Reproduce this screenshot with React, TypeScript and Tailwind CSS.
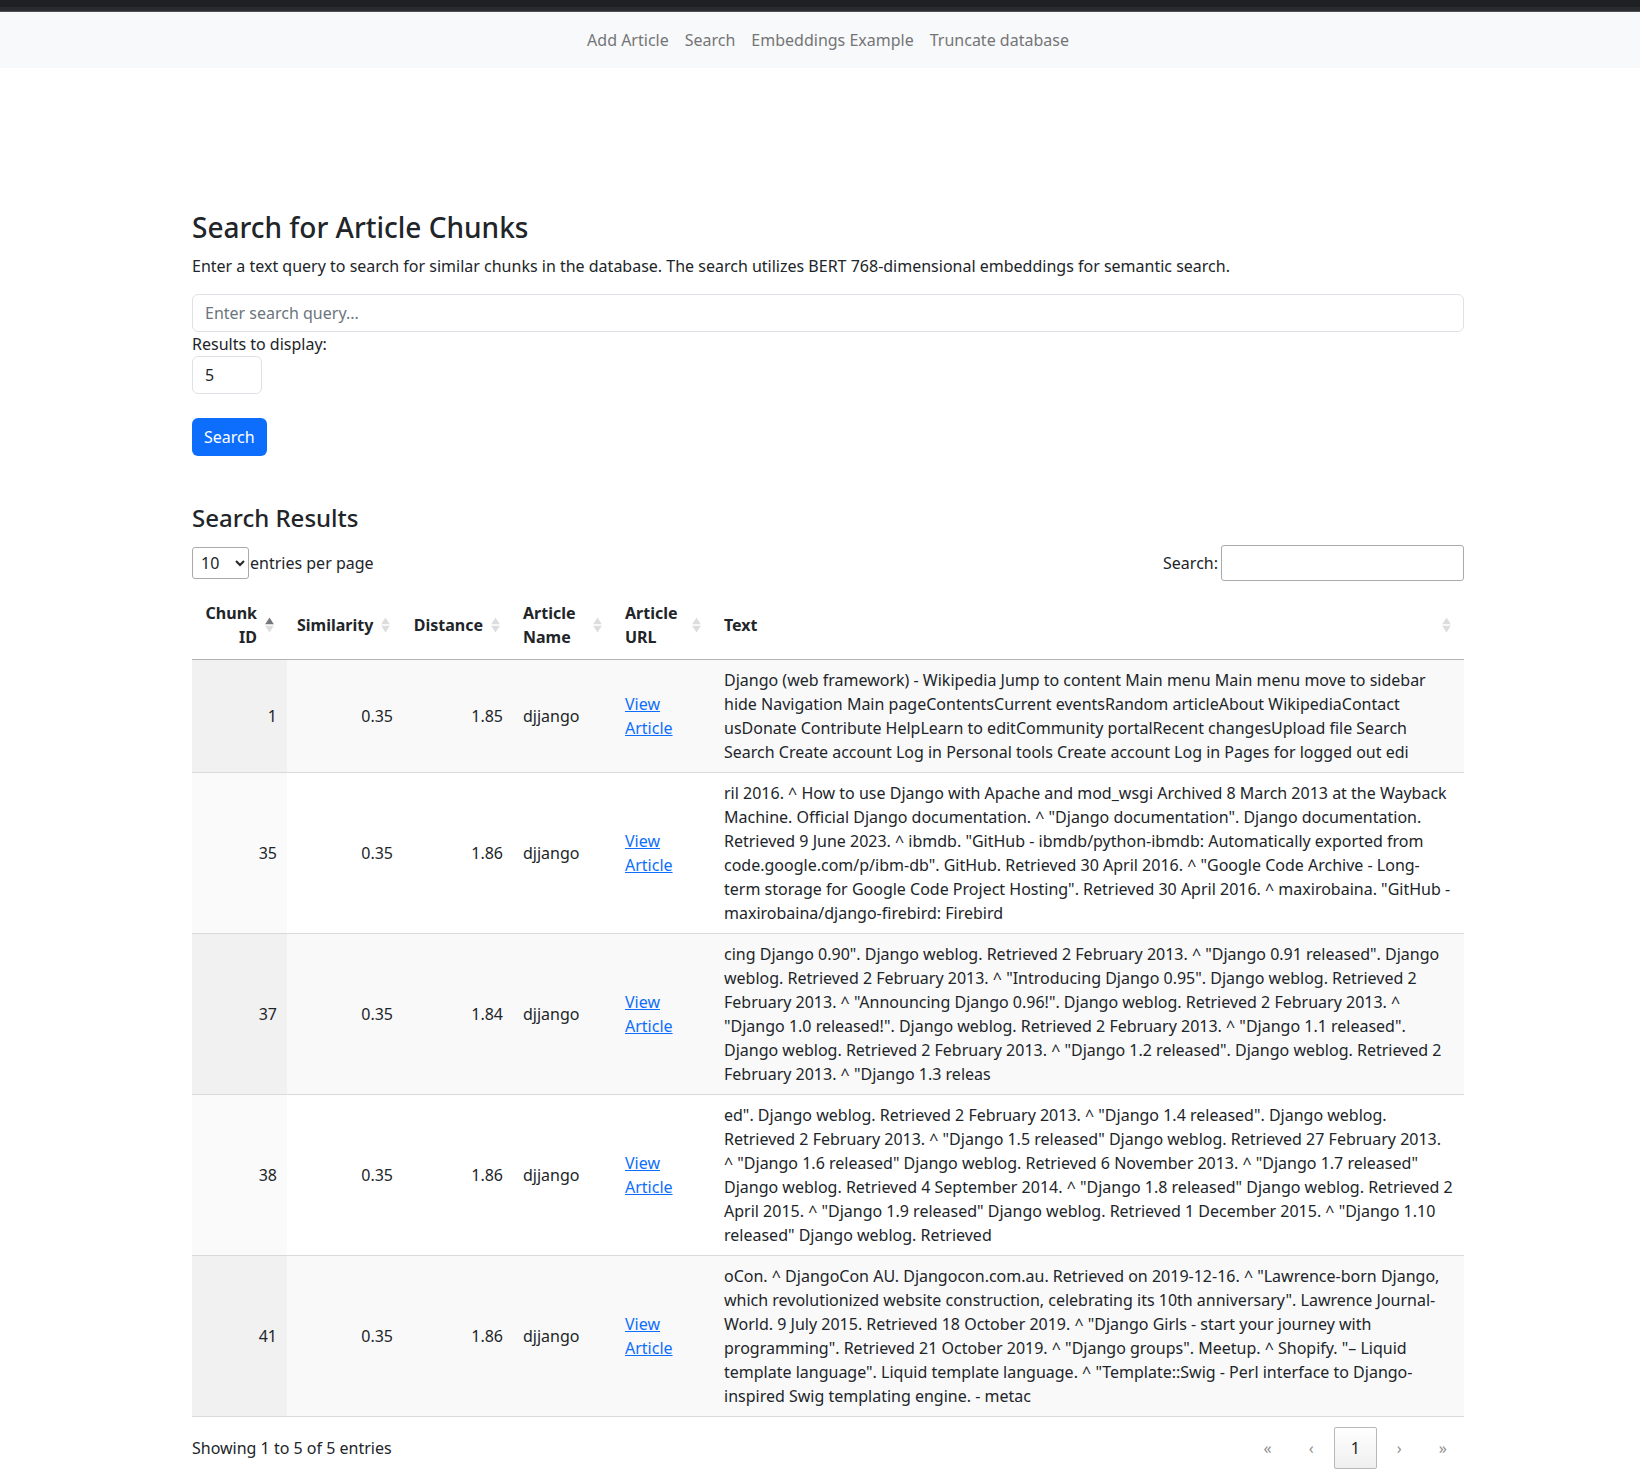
import React from "react";

type Row = { id: number; sim: string; dist: string; name: string; text: string };

const rows: Row[] = [
  {
    id: 1,
    sim: "0.35",
    dist: "1.85",
    name: "djjango",
    text: "Django (web framework) - Wikipedia Jump to content Main menu Main menu move to sidebar hide Navigation Main pageContentsCurrent eventsRandom articleAbout WikipediaContact usDonate Contribute HelpLearn to editCommunity portalRecent changesUpload file Search Search Create account Log in Personal tools Create account Log in Pages for logged out edi",
  },
  {
    id: 35,
    sim: "0.35",
    dist: "1.86",
    name: "djjango",
    text: 'ril 2016. ^ How to use Django with Apache and mod_wsgi Archived 8 March 2013 at the Wayback Machine. Official Django documentation. ^ "Django documentation". Django documentation. Retrieved 9 June 2023. ^ ibmdb. "GitHub - ibmdb/python-ibmdb: Automatically exported from code.google.com/p/ibm-db". GitHub. Retrieved 30 April 2016. ^ "Google Code Archive - Long-term storage for Google Code Project Hosting". Retrieved 30 April 2016. ^ maxirobaina. "GitHub - maxirobaina/django-firebird: Firebird',
  },
  {
    id: 37,
    sim: "0.35",
    dist: "1.84",
    name: "djjango",
    text: 'cing Django 0.90". Django weblog. Retrieved 2 February 2013. ^ "Django 0.91 released". Django weblog. Retrieved 2 February 2013. ^ "Introducing Django 0.95". Django weblog. Retrieved 2 February 2013. ^ "Announcing Django 0.96!". Django weblog. Retrieved 2 February 2013. ^ "Django 1.0 released!". Django weblog. Retrieved 2 February 2013. ^ "Django 1.1 released". Django weblog. Retrieved 2 February 2013. ^ "Django 1.2 released". Django weblog. Retrieved 2 February 2013. ^ "Django 1.3 releas',
  },
  {
    id: 38,
    sim: "0.35",
    dist: "1.86",
    name: "djjango",
    text: 'ed". Django weblog. Retrieved 2 February 2013. ^ "Django 1.4 released". Django weblog. Retrieved 2 February 2013. ^ "Django 1.5 released" Django weblog. Retrieved 27 February 2013. ^ "Django 1.6 released" Django weblog. Retrieved 6 November 2013. ^ "Django 1.7 released" Django weblog. Retrieved 4 September 2014. ^ "Django 1.8 released" Django weblog. Retrieved 2 April 2015. ^ "Django 1.9 released" Django weblog. Retrieved 1 December 2015. ^ "Django 1.10 released" Django weblog. Retrieved',
  },
  {
    id: 41,
    sim: "0.35",
    dist: "1.86",
    name: "djjango",
    text: 'oCon. ^ DjangoCon AU. Djangocon.com.au. Retrieved on 2019-12-16. ^ "Lawrence-born Django, which revolutionized website construction, celebrating its 10th anniversary". Lawrence Journal-World. 9 July 2015. Retrieved 18 October 2019. ^ "Django Girls - start your journey with programming". Retrieved 21 October 2019. ^ "Django groups". Meetup. ^ Shopify. "\u2013 Liquid template language". Liquid template language. ^ "Template::Swig - Perl interface to Django-inspired Swig templating engine. - metac',
  },
];

function SortIcon({ active = false }: { active?: boolean }) {
  return (
    <span className="absolute right-[12px] top-1/2 -translate-y-1/2 flex w-[12px] flex-col items-center gap-[1px]">
      <svg width="9" height="7" viewBox="0 0 9 7">
        <polygon points="4.5,0 9,7 0,7" fill={active ? "#75777a" : "#dcdddf"} />
      </svg>
      <svg width="9" height="7" viewBox="0 0 9 7">
        <polygon points="0,0 9,0 4.5,7" fill="#dcdddf" />
      </svg>
    </span>
  );
}

export default function App() {
  return (
    <div className="min-h-screen bg-white font-['Noto_Sans',sans-serif] text-[16px] leading-6 text-[#212529]">
      <div className="h-[7px] bg-[#1f2023]" />
      <div className="h-[5px] border-b border-[#505154] bg-[#2a2b2e]" />
      <nav className="flex h-[56px] items-center justify-center bg-[#f8f9fa] pl-4">
        {["Add Article", "Search", "Embeddings Example", "Truncate database"].map((l) => (
          <a key={l} href="#" className="px-2 text-[#747577] no-underline">
            {l}
          </a>
        ))}
      </nav>

      <main className="pl-4 pb-[6px]">
        <div className="mx-auto w-[1272px] pt-[143px]">
          <h3 className="h-[34px] text-[28px] font-medium leading-[1.2]">Search for Article Chunks</h3>
          <p className="mt-[9px]">
            Enter a text query to search for similar chunks in the database. The search utilizes BERT 768-dimensional
            embeddings for semantic search.
          </p>
          <input
            type="text"
            placeholder="Enter search query..."
            className="mt-4 block h-[38px] w-full rounded-[6px] border border-[#dee2e6] px-3 text-[16px] outline-none placeholder:text-[#6c757d]"
          />
          <label className="block">Results to display:</label>
          <input
            type="text"
            defaultValue="5"
            className="block h-[38px] w-[70px] rounded-[6px] border border-[#dee2e6] px-3 text-[16px] outline-none"
          />
          <button className="mt-6 h-[38px] rounded-[6px] bg-[#0d6efd] px-3 text-white">Search</button>

          <h4 className="mt-12 h-[29px] text-[24px] font-medium leading-[1.2]">Search Results</h4>

          <div className="mt-3 flex h-[36px] items-center justify-between">
            <div className="flex items-center">
              <select className="h-[32px] w-[57px] rounded-[3px] border border-[#aaaaaa] bg-transparent px-1 text-[16px] text-[#212529]">
                <option>10</option>
                <option>25</option>
                <option>50</option>
              </select>
              <span className="ml-[1px]">entries per page</span>
            </div>
            <div className="flex items-center">
              <span>Search:</span>
              <input
                type="text"
                className="ml-[3px] h-[36px] w-[243px] rounded-[3px] border border-[#aaaaaa] px-1 outline-none"
              />
            </div>
          </div>

          <table className="mt-[10px] w-full table-fixed border-collapse">
            <colgroup>
              <col className="w-[95px]" />
              <col className="w-[116px]" />
              <col className="w-[110px]" />
              <col className="w-[102px]" />
              <col className="w-[99px]" />
              <col className="w-[750px]" />
            </colgroup>
            <thead>
              <tr className="border-b border-[#b3b3b3]">
                <th className="relative p-[10px] pr-[30px] text-right align-middle font-bold">
                  Chunk ID
                  <SortIcon active />
                </th>
                <th className="relative p-[10px] pr-[30px] text-right align-middle font-bold">
                  Similarity
                  <SortIcon />
                </th>
                <th className="relative p-[10px] pr-[30px] text-right align-middle font-bold">
                  Distance
                  <SortIcon />
                </th>
                <th className="relative p-[10px] pr-[30px] text-left align-middle font-bold">
                  Article Name
                  <SortIcon />
                </th>
                <th className="relative p-[10px] pr-[30px] text-left align-middle font-bold">
                  Article URL
                  <SortIcon />
                </th>
                <th className="relative p-[10px] pr-[30px] text-left align-middle font-bold">
                  Text
                  <SortIcon />
                </th>
              </tr>
            </thead>
            <tbody>
              {rows.map((r, i) => {
                const odd = i % 2 === 0;
                const last = i === rows.length - 1;
                return (
                  <tr
                    key={r.id}
                    className={
                      (odd ? "bg-[#f9f9f9] " : "bg-white ") +
                      (i === 0 ? "" : "border-t border-[#dadada] ") +
                      (last ? "border-b border-[#b3b3b3]" : "")
                    }
                  >
                    <td className={"px-[10px] py-2 text-right align-middle " + (odd ? "bg-[#f1f1f1]" : "bg-[#fafafa]")}>
                      {r.id}
                    </td>
                    <td className="px-[10px] py-2 text-right align-middle">{r.sim}</td>
                    <td className="px-[10px] py-2 text-right align-middle">{r.dist}</td>
                    <td className="px-[10px] py-2 align-middle">{r.name}</td>
                    <td className="px-[10px] py-2 align-middle">
                      <a href="#" className="text-[#0d6efd] underline">
                        View Article
                      </a>
                    </td>
                    <td className="px-[10px] py-2 align-middle">{r.text}</td>
                  </tr>
                );
              })}
            </tbody>
          </table>

          <div className="mt-[10px] flex h-[42px] items-center justify-between">
            <div>Showing 1 to 5 of 5 entries</div>
            <div className="flex items-center">
              {["\u00ab", "\u2039"].map((g) => (
                <span key={g} className="ml-[2px] min-w-[41px] border border-transparent px-4 py-2 text-center text-[#8f8f8f]">
                  {g}
                </span>
              ))}
              <span className="ml-[2px] min-w-[41px] rounded-[2px] border border-[#b8b8b8] bg-linear-to-b from-white to-[#efefef] px-4 py-2 text-center text-[#212529]">
                1
              </span>
              {["\u203a", "\u00bb"].map((g) => (
                <span key={g} className="ml-[2px] min-w-[41px] border border-transparent px-4 py-2 text-center text-[#8f8f8f]">
                  {g}
                </span>
              ))}
            </div>
          </div>
        </div>
      </main>
    </div>
  );
}
